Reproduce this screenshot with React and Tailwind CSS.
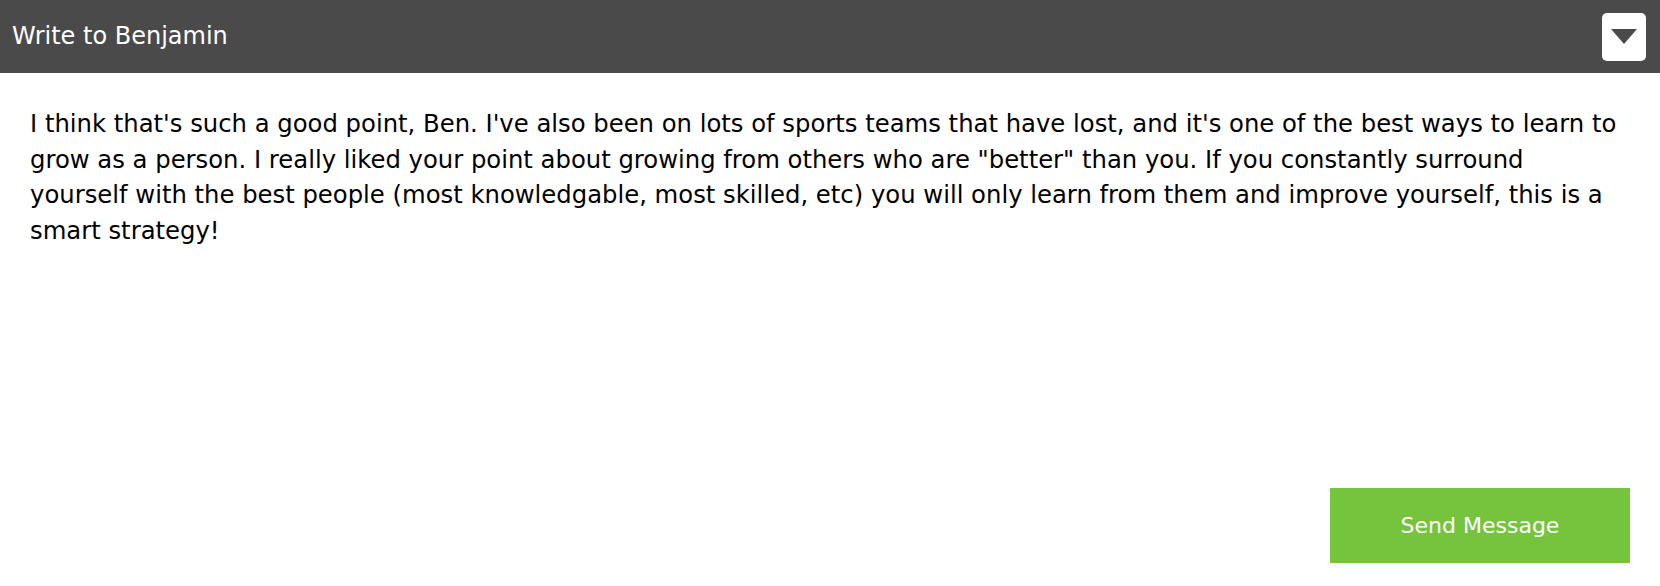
export default function App() {
  return (
    <div className="w-[1660px] h-[586px] bg-white flex flex-col font-['DejaVu_Sans',Verdana,sans-serif]">
      {/* Header */}
      <div className="h-[73px] bg-[#4a4a4a] flex items-center justify-between pl-3 pr-[14px]">
        <h2 className="text-white text-[24px] leading-none pb-[2px]">Write to Benjamin</h2>
        <button className="w-[44px] h-[48px] bg-white rounded-[5px] flex items-center justify-center">
          <svg width="26" height="16" viewBox="0 0 26 16">
            <path d="M0 0 H26 L13 15 Z" fill="#4a4a4a" />
          </svg>
        </button>
      </div>

      {/* Message */}
      <div className="flex-1 flex flex-col pl-[30px] pr-[30px] pt-[33px] pb-[23px]">
        <p className="text-[24.3px] leading-[35.5px] text-black pr-[6px]">
          I think that's such a good point, Ben. I've also been on lots of sports teams that have lost, and it's one of the best ways to learn to grow as a person. I really liked your point about growing from others who are "better" than you. If you constantly surround yourself with the best people (most knowledgable, most skilled, etc) you will only learn from them and improve yourself, this is a smart strategy!
        </p>
        <div className="mt-auto flex justify-end">
          <button className="w-[300px] h-[75px] bg-[#76c43d] text-white text-[22px]">
            Send Message
          </button>
        </div>
      </div>
    </div>
  );
}
